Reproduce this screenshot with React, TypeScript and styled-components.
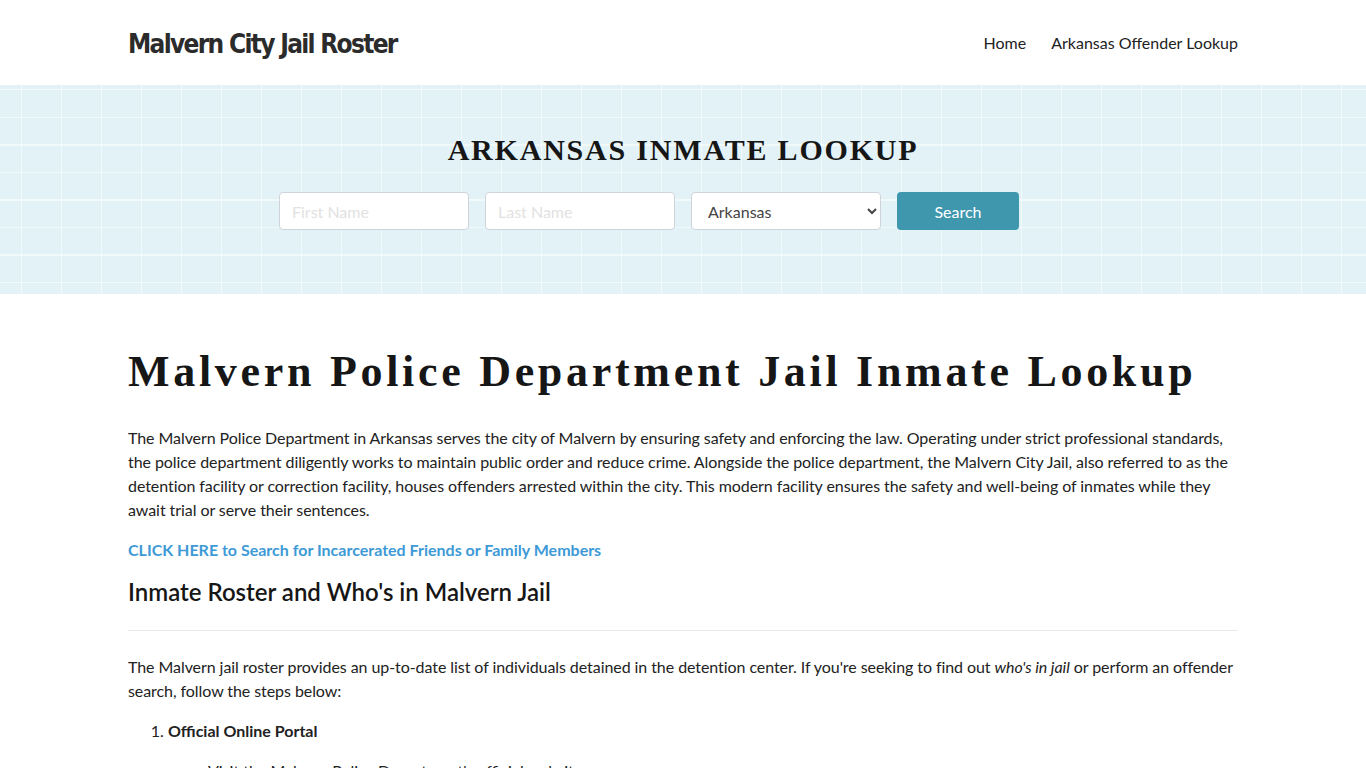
import React from "react";
import styled, { createGlobalStyle } from "styled-components";

const Global = createGlobalStyle`
  html, body { margin: 0; padding: 0; background: #fff; }
  body { font-family: Lato, "Open Sans", sans-serif; color: #222; }
  * { box-sizing: border-box; }
`;

const Container = styled.div`
  width: 1110px;
  margin: 0 auto;
`;

const Header = styled.header`
  height: 85px;
  background: #fff;
`;

const HeaderInner = styled(Container)`
  height: 100%;
  display: flex;
  align-items: center;
  justify-content: space-between;
`;

const Logo = styled.a`
  font-family: "DejaVu Sans", sans-serif;
  font-stretch: condensed;
  font-weight: 700;
  font-size: 26px;
  color: #2b2b2b;
  text-decoration: none;
  letter-spacing: -1.7px;
  margin-top: 2px;
`;

const Nav = styled.nav`
  display: flex;
  gap: 25px;
`;

const NavLink = styled.a`
  font-size: 16px;
  color: #222;
  text-decoration: none;
`;

const Hero = styled.section`
  background-color: #e3f2f7;
  background-image:
    repeating-linear-gradient(90deg, transparent 0 21px, rgba(255,255,255,0.55) 21px 22.5px, transparent 22.5px 40px),
    repeating-linear-gradient(180deg, transparent 0 4px, rgba(255,255,255,0.55) 4px 5.5px, transparent 5.5px 27.5px);
  padding: 47px 0 64px;
`;

const HeroTitle = styled.h2`
  margin: 0 0 24px;
  text-align: center;
  font-family: "Liberation Serif", "DejaVu Serif", serif;
  font-weight: 700;
  font-size: 30px;
  line-height: 36px;
  letter-spacing: 1.8px;
  color: #161616;
`;

const SearchForm = styled.form`
  display: flex;
  gap: 16px;
  padding-left: 151px;
`;

const Field = styled.input`
  width: 190px;
  height: 38px;
  border: 1px solid #ced4da;
  border-radius: 4px;
  background: #fff;
  padding: 0 12px;
  font-family: Lato, sans-serif;
  font-size: 16px;
  color: #444;
  &::placeholder { color: #e2e2e2; }
`;

const Select = styled.select`
  width: 190px;
  height: 38px;
  border: 1px solid #ced4da;
  border-radius: 4px;
  background: #fff;
  padding: 0 12px;
  font-family: Lato, sans-serif;
  font-size: 16px;
  color: #444;
`;

const Button = styled.button`
  width: 122px;
  height: 38px;
  border: none;
  border-radius: 4px;
  background: #3f97ae;
  color: #fff;
  font-family: Lato, sans-serif;
  font-size: 16px;
`;

const Main = styled(Container)`
  padding-top: 53px;
`;

const H1 = styled.h1`
  margin: 0 0 29px;
  font-family: "Liberation Serif", "DejaVu Serif", serif;
  font-weight: 700;
  font-size: 44px;
  line-height: 50px;
  letter-spacing: 3.7px;
  color: #161616;
`;

const P = styled.p`
  margin: 0 0 16px;
  font-size: 16px;
  line-height: 24px;
  letter-spacing: -0.07px;
  color: #222;
`;

const Cta = styled.a`
  display: block;
  font-weight: 700;
  font-size: 16px;
  line-height: 24px;
  color: #3d9ad6;
  text-decoration: none;
  margin-bottom: 14px;
`;

const H2 = styled.h2`
  margin: 0;
  font-size: 24px;
  line-height: 32px;
  font-weight: 600;
  color: #161616;
`;

const Rule = styled.hr`
  border: 0;
  border-top: 1px solid #e9e9e9;
  margin: 22px 0 24px;
`;

const Steps = styled.ol`
  margin: 0;
  padding-left: 40px;
  font-size: 16px;
  line-height: 24px;
  color: #222;
`;

const Step = styled.li`
  margin-top: 16px;
`;

const SubList = styled.ul`
  margin: 16px 0 0;
  padding-left: 40px;
  list-style: disc;
`;

export default function App() {
  return (
    <>
      <Global />
      <Header>
        <HeaderInner>
          <Logo href="#">Malvern City Jail Roster</Logo>
          <Nav>
            <NavLink href="#">Home</NavLink>
            <NavLink href="#">Arkansas Offender Lookup</NavLink>
          </Nav>
        </HeaderInner>
      </Header>
      <Hero>
        <Container>
          <HeroTitle>ARKANSAS INMATE LOOKUP</HeroTitle>
          <SearchForm onSubmit={(e) => e.preventDefault()}>
            <Field placeholder="First Name" />
            <Field placeholder="Last Name" />
            <Select defaultValue="Arkansas">
              <option>Arkansas</option>
            </Select>
            <Button type="submit">Search</Button>
          </SearchForm>
        </Container>
      </Hero>
      <Main>
        <H1>Malvern Police Department Jail Inmate Lookup</H1>
        <P>
          The Malvern Police Department in Arkansas serves the city of Malvern by ensuring safety and enforcing the law. Operating under strict professional standards, the police department diligently works to maintain public order and reduce crime. Alongside the police department, the Malvern City Jail, also referred to as the detention facility or correction facility, houses offenders arrested within the city. This modern facility ensures the safety and well-being of inmates while they await trial or serve their sentences.
        </P>
        <Cta href="#">CLICK HERE to Search for Incarcerated Friends or Family Members</Cta>
        <H2>Inmate Roster and Who's in Malvern Jail</H2>
        <Rule />
        <P>
          The Malvern jail roster provides an up-to-date list of individuals detained in the detention center. If you're seeking to find out <em>who's in jail</em> or perform an offender search, follow the steps below:
        </P>
        <Steps>
          <Step>
            <strong>Official Online Portal</strong>
            <SubList>
              <li>Visit the Malvern Police Department's official website.</li>
            </SubList>
          </Step>
        </Steps>
      </Main>
    </>
  );
}
